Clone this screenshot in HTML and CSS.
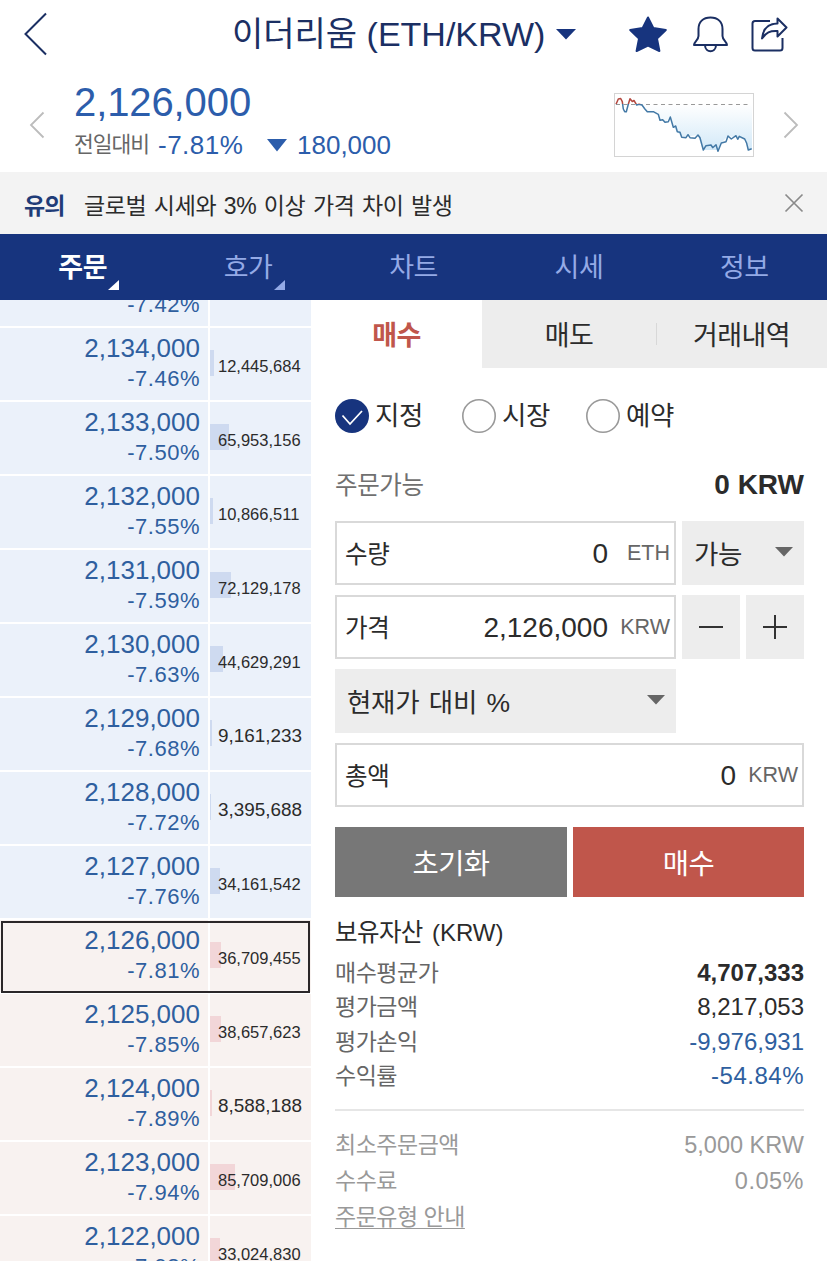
FILE: index.html
```html
<!DOCTYPE html>
<html lang="ko">
<head>
  <meta charset="UTF-8">
  <meta name="viewport" content="width=device-width, initial-scale=1.0">
  <title>이더리움 (ETH/KRW)</title>
  <link rel="stylesheet" href="styles.css">
</head>
<body>
  <header class="header">
    <svg class="back" width="24" height="44" viewBox="0 0 24 44"><path d="M22 1.500L1.500 22L22 42.500" fill="none" stroke="#1b2f63" stroke-width="2"/></svg>
    <h1 class="title">이더리움 (ETH/KRW)</h1>
    <svg class="title-arrow" width="20" height="11" viewBox="0 0 20 11"><path d="M0 0H20L10 10.500Z" fill="#17347e"/></svg>
    <div class="header-icons">
      <svg width="40" height="40" viewBox="0 0 40 40"><path d="M20 3.500L25.300 14L37.800 16L29 24.600L31.400 37L20 31.500L8.600 37L11 24.600L2.200 16L14.700 14Z" fill="#17347e" stroke="#17347e" stroke-width="2" stroke-linejoin="round"/></svg>
      <svg width="40" height="40" viewBox="0 0 40 40" fill="none" stroke="#1b2f63" stroke-width="2" stroke-linejoin="round"><path d="M21.500 3.500C14 3.500 9.500 8 9.500 15V22C9.500 26 5 28 5 31H38C38 28 33.500 26 33.500 22V15C33.500 8 29 3.500 21.500 3.500Z"/><path d="M16 31.500C16.500 39 26.500 39 27 31.500"/></svg>
      <svg width="40" height="40" viewBox="0 0 40 40" fill="none" stroke="#1b2f63" stroke-width="2" stroke-linejoin="round"><path d="M20 7H5Q2.500 7 2.500 9.500V34Q2.500 36.500 5 36.500H30Q32.500 36.500 32.500 34V24"/><path d="M12 24.500C13 15 18 9.500 27.500 9.500V4.500L36.500 13.500L27.500 22.500V17C20 16.500 16 18.500 12 24.500Z"/></svg>
    </div>
  </header>

  <section class="summary">
    <svg class="prev" width="16" height="28" viewBox="0 0 16 28"><path d="M14.500 1.500L2 14L14.500 26.500" fill="none" stroke="#bcbcbc" stroke-width="1.800"/></svg>
    <div class="summary-text">
      <div class="price">2,126,000</div>
      <div class="change">
        <span class="change-label">전일대비</span>
        <span class="change-rate">-7.81%</span>
        <svg width="20" height="13" viewBox="0 0 20 13"><path d="M0 0H20L10 12.500Z" fill="#2c5dab"/></svg>
        <span class="change-diff">180,000</span>
      </div>
    </div>
    <svg class="chart" width="140" height="64" viewBox="0 0 140 64">
      <defs>
        <linearGradient id="fall" x1="0" y1="0" x2="0" y2="1"><stop offset="0" stop-color="#fff"/><stop offset="1" stop-color="#d3e9f8"/></linearGradient>
        <clipPath id="above"><rect width="140" height="11"/></clipPath>
        <clipPath id="below"><rect y="11" width="140" height="53"/></clipPath>
      </defs>
      <rect x=".5" y=".5" width="139" height="63" fill="#fff" stroke="#d4d4d4"/>
      <path d="M28 12L33 18.700L44 21.300L46 27.300L51 29.300L56 24L59 34L63 38.700L68 44.300L84 42L89 57L104 57L107 50L114 43L130.700 46L134 57L138 56V11H28Z" fill="url(#fall)"/>
      <path d="M2 11.500H136" stroke="#999" stroke-dasharray="4 3.500"/>
      <g fill="none" stroke-width="1.500" stroke-linejoin="round">
        <polyline clip-path="url(#above)" stroke="#b4483f" points="2,11.300 4.300,6 6.700,5.500 8.300,8.700 9.300,16 10.700,18.700 12.300,18.700 14.300,11.300 16,5.700 18.300,8.500 20,7.500 22.700,12 25,11.300 28,12"/>
        <polyline clip-path="url(#below)" stroke="#4379a6" points="2,11.300 4.300,6 6.700,5.500 8.300,8.700 9.300,16 10.700,18.700 12.300,18.700 14.300,11.300 16,5.700 18.300,8.500 20,7.500 22.700,12 25,11.300 28,12 30.700,15.700 33.300,18.700 39.300,18.700 44.300,21.300 46,27.300 48.700,26.700 51,29.300 54.300,28.700 56.300,24 59.300,34.300 61.700,33 63.300,38.700 66,39.300 67.700,44.300 72,44.700 74,41.700 76,44.700 81,45.300 84,42 86,44.700 89.300,57 92,52.700 97,52 98.700,54.700 102,51.700 104,58.300 107.300,50 112,48.700 114,43 117.300,46 122,42.700 123.700,46.300 125.300,43.300 130.700,46 132.700,50.300 134.300,57 137.700,55.700"/>
      </g>
    </svg>
    <svg class="next" width="16" height="28" viewBox="0 0 16 28"><path d="M1.500 1.500L14 14L1.500 26.500" fill="none" stroke="#bcbcbc" stroke-width="1.800"/></svg>
  </section>

  <div class="notice">
    <strong>유의</strong>
    <span>글로벌 시세와 3% 이상 가격 차이 발생</span>
    <svg class="close" width="20" height="20" viewBox="0 0 20 20"><path d="M1.500 1.500L18.500 18.500M18.500 1.500L1.500 18.500" stroke="#8a8a8a" stroke-width="1.700"/></svg>
  </div>

  <nav class="tabs">
    <a class="tab tab-on tab-more">주문</a>
    <a class="tab tab-more">호가</a>
    <a class="tab">차트</a>
    <a class="tab">시세</a>
    <a class="tab">정보</a>
  </nav>

  <main class="main">
    <div class="book">
      <div class="row row-cut"><div class="cell"><p class="r">-7.42%</p></div><div class="qty"></div></div>
      <div class="row"><div class="cell"><p class="p">2,134,000</p><p class="r">-7.46%</p></div><div class="qty"><i style="width: 4px"></i><span>12,445,684</span></div></div>
      <div class="row"><div class="cell"><p class="p">2,133,000</p><p class="r">-7.50%</p></div><div class="qty"><i style="width: 19px"></i><span>65,953,156</span></div></div>
      <div class="row"><div class="cell"><p class="p">2,132,000</p><p class="r">-7.55%</p></div><div class="qty"><i style="width: 3px"></i><span>10,866,511</span></div></div>
      <div class="row"><div class="cell"><p class="p">2,131,000</p><p class="r">-7.59%</p></div><div class="qty"><i style="width: 21px"></i><span>72,129,178</span></div></div>
      <div class="row"><div class="cell"><p class="p">2,130,000</p><p class="r">-7.63%</p></div><div class="qty"><i style="width: 13px"></i><span>44,629,291</span></div></div>
      <div class="row"><div class="cell"><p class="p">2,129,000</p><p class="r">-7.68%</p></div><div class="qty"><i style="width: 2px"></i><span class="big">9,161,233</span></div></div>
      <div class="row"><div class="cell"><p class="p">2,128,000</p><p class="r">-7.72%</p></div><div class="qty"><i style="width: 1px"></i><span class="big">3,395,688</span></div></div>
      <div class="row"><div class="cell"><p class="p">2,127,000</p><p class="r">-7.76%</p></div><div class="qty"><i style="width: 10px"></i><span>34,161,542</span></div></div>
      <div class="row buy now"><div class="cell"><p class="p">2,126,000</p><p class="r">-7.81%</p></div><div class="qty"><i style="width: 11px"></i><span>36,709,455</span></div></div>
      <div class="row buy"><div class="cell"><p class="p">2,125,000</p><p class="r">-7.85%</p></div><div class="qty"><i style="width: 11px"></i><span>38,657,623</span></div></div>
      <div class="row buy"><div class="cell"><p class="p">2,124,000</p><p class="r">-7.89%</p></div><div class="qty"><i style="width: 2px"></i><span class="big">8,588,188</span></div></div>
      <div class="row buy"><div class="cell"><p class="p">2,123,000</p><p class="r">-7.94%</p></div><div class="qty"><i style="width: 25px"></i><span>85,709,006</span></div></div>
      <div class="row buy"><div class="cell"><p class="p">2,122,000</p><p class="r">-7.98%</p></div><div class="qty"><i style="width: 10px"></i><span>33,024,830</span></div></div>
    </div>

    <div class="order">
      <div class="order-tabs">
        <a class="order-tab order-tab-on">매수</a>
        <a class="order-tab">매도</a>
        <a class="order-tab order-tab-line">거래내역</a>
      </div>

      <div class="form">
        <div class="types">
          <label class="type"><svg width="34" height="34" viewBox="0 0 34 34"><circle cx="17" cy="17" r="17" fill="#17347e"/><path d="M7.500 16.500L15 25L27 12" fill="none" stroke="#fff" stroke-width="1.800"/></svg>지정</label>
          <label class="type"><svg width="34" height="34" viewBox="0 0 34 34"><circle cx="17" cy="17" r="16.200" fill="#fff" stroke="#999" stroke-width="1.600"/></svg>시장</label>
          <label class="type"><svg width="34" height="34" viewBox="0 0 34 34"><circle cx="17" cy="17" r="16.200" fill="#fff" stroke="#999" stroke-width="1.600"/></svg>예약</label>
        </div>
        <div class="avail"><span>주문가능</span><b>0 KRW</b></div>

        <div class="line">
          <div class="field"><span>수량</span><em>0</em><small>ETH</small></div>
          <div class="select select-amount">가능<svg width="18" height="10" viewBox="0 0 18 10"><path d="M0 0H18L9 9.500Z" fill="#666"/></svg></div>
        </div>
        <div class="line">
          <div class="field"><span>가격</span><em>2,126,000</em><small>KRW</small></div>
          <div class="step"><svg width="24" height="24" viewBox="0 0 24 24"><path d="M0 12H24" stroke="#333" stroke-width="2"/></svg></div>
          <div class="step"><svg width="24" height="24" viewBox="0 0 24 24"><path d="M0 12H24M12 0V24" stroke="#333" stroke-width="2"/></svg></div>
        </div>
        <div class="line">
          <div class="select select-ratio">현재가 대비 %<svg width="18" height="10" viewBox="0 0 18 10"><path d="M0 0H18L9 9.500Z" fill="#666"/></svg></div>
        </div>
        <div class="line">
          <div class="field field-total"><span>총액</span><em>0</em><small>KRW</small></div>
        </div>

        <div class="buttons">
          <a class="btn btn-reset">초기화</a>
          <a class="btn btn-buy">매수</a>
        </div>

        <h2 class="asset-title">보유자산 <span>(KRW)</span></h2>
        <dl class="assets">
          <div><dt>매수평균가</dt><dd class="bold">4,707,333</dd></div>
          <div><dt>평가금액</dt><dd>8,217,053</dd></div>
          <div><dt>평가손익</dt><dd class="blue">-9,976,931</dd></div>
          <div><dt>수익률</dt><dd class="blue wide">-54.84%</dd></div>
        </dl>
        <dl class="info">
          <div><dt>최소주문금액</dt><dd>5,000 KRW</dd></div>
          <div><dt>수수료</dt><dd class="wide">0.05%</dd></div>
          <div><dt><a class="guide">주문유형 안내</a></dt></div>
        </dl>
      </div>
    </div>
  </main>
</body>
</html>
```
FILE: styles.css
```css
* { box-sizing: border-box; margin: 0; padding: 0; }
body {
  width: 827px;
  height: 1261px;
  overflow: hidden;
  background: #fff;
  color: #2b2b2b;
  font-family: "Liberation Sans", "Noto Sans CJK KR", sans-serif;
  white-space: nowrap;
}
svg { display: block; flex: none; }

/* header */
.header { display: flex; align-items: center; height: 68px; padding: 0 19px 0 24px; color: #1b2f63; }
.title { width: 316px; margin-left: 184px; font-size: 34px; font-weight: 400; line-height: 68px; }
.title-arrow { margin-left: 8px; }
.header-icons { display: flex; gap: 21px; margin-left: auto; margin-right: 18px; }

.summary { display: flex; align-items: center; height: 104px; padding: 9px 28px 0 29px; color: #2c5dab; }
.summary-text { margin-left: 29px; height: 95px; }
.price { font-size: 40px; line-height: 50px; letter-spacing: -0.1px; }
.change { display: flex; align-items: center; font-size: 26px; line-height: 36px; }
.change-label { width: 84px; font-size: 21.5px; letter-spacing: -1px; color: #666; }
.change-rate { width: 109px; letter-spacing: 0.5px; }
.change-diff { margin-left: 10px; }
.chart { margin-left: auto; }
.next { margin-left: 29px; }

.notice { display: flex; align-items: center; height: 62px; padding: 2px 23px 0 24px; background: #f3f3f3; font-size: 23px; letter-spacing: -0.4px; word-spacing: 1.6px; }
.notice strong { width: 60px; color: #1f3c78; letter-spacing: -1px; }
.close { margin-top: -2px; margin-left: auto; }

.tabs { display: flex; height: 66px; background: #17347e; }
.tab { position: relative; flex: 1; padding-top: 2px; text-align: center; font-size: 27px; letter-spacing: -0.5px; line-height: 64px; color: #94aae6; }
.tab-on { font-weight: bold; color: #fff; }
.tab-more::after {
  content: "";
  position: absolute;
  right: 46px;
  bottom: 10px;
  border-left: 11px solid transparent;
  border-bottom: 10px solid currentColor;
}

.main { display: flex; height: 961px; }

/* order book */
.book { flex: none; width: 311px; height: 961px; overflow: hidden; }
.row { display: flex; gap: 2px; height: 72px; margin-bottom: 2px; }
.row-cut { height: 26px; }
.row-cut .cell, .row-cut .qty { height: 26px; padding-top: 0; }
.row-cut .r { margin-top: -10px; }
.cell { width: 208px; height: 72px; padding: 4px 8px 0 0; background: #ebf1fa; text-align: right; color: #2f5f9f; }
.p { font-size: 26px; line-height: 32px; }
.r { font-size: 22px; line-height: 29px; letter-spacing: 0.5px; }
.qty { display: flex; align-items: center; position: relative; width: 101px; height: 72px; padding: 5px 0 0 8px; background: #ebf1fa; font-size: 16.5px; }
.qty i { position: absolute; left: 0; top: 22px; height: 26px; background: #cedaf0; }
.qty span { position: relative; }
.qty .big { margin-top: -2px; font-size: 18.9px; }
.buy .cell, .buy .qty { background: #f8f2f0; }
.buy .qty i { background: #f2d6d8; }
.now { position: relative; }
.now::after { content: ""; position: absolute; left: 1px; right: 1px; top: 1px; bottom: -1px; border: 2px solid #2b2729; }

/* order form */
.order { flex: 1; }
.order-tabs { display: flex; height: 68px; background: #ededed; font-size: 27px; letter-spacing: -0.6px; line-height: 66px; text-align: center; }
.order-tab { width: 174px; height: 68px; padding-top: 3px; }
.order-tab-on { width: 171px; background: #fff; color: #c0564b; font-weight: bold; }
.order-tab-line { width: 171px; background: linear-gradient(#d8d8d8, #d8d8d8) 0 23px / 1px 22px no-repeat; }

.form { padding: 31px 23px 0 24px; }
.types { display: flex; height: 34px; }
.type { display: flex; align-items: center; gap: 6px; width: 127px; font-size: 26.5px; letter-spacing: -0.5px; line-height: 36px; }
.type + .type { width: 124px; }
.avail { display: flex; justify-content: space-between; margin-top: 35px; margin-bottom: 19px; line-height: 34px; }
.avail span { padding-top: 1px; font-size: 24.5px; letter-spacing: -0.4px; color: #707070; line-height: 33px; }
.avail b { font-size: 28px; line-height: 33px; }

.line { display: flex; gap: 6px; height: 64px; margin-bottom: 10px; }
.field { display: flex; align-items: center; width: 341px; padding: 0 4px 0 8px; border: 2px solid #d9d9d9; }
.field span { margin-top: -2px; font-size: 24.5px; letter-spacing: -0.4px; }
.field em { margin-top: 2px; margin-left: auto; font-size: 28px; font-style: normal; }
.field small { width: 50px; margin-left: 12px; font-size: 21.5px; text-align: right; color: #666; }
.field-total { width: 469px; }
.select { display: flex; align-items: center; justify-content: space-between; padding: 0 11px 2px 12px; background: #ededed; font-size: 26.5px; letter-spacing: -0.3px; word-spacing: 2.5px; }
.select-amount { width: 122px; }
.select-ratio { width: 341px; }
.step { display: flex; align-items: center; justify-content: center; width: 58px; background: #ededed; }

.buttons { display: flex; gap: 6px; margin-top: 20px; }
.btn { width: 232px; height: 70px; color: #fff; font-size: 28.5px; letter-spacing: -0.5px; line-height: 74px; text-align: center; }
.btn-reset { background: #777; }
.btn-buy { width: 231px; background: #c0564b; }

.asset-title { margin-top: 18px; font-size: 24.5px; font-weight: 400; letter-spacing: -0.6px; line-height: 36px; }
.asset-title span { margin-left: 3px; font-size: 24px; letter-spacing: 0; }
dl div { display: flex; justify-content: space-between; }
dt { font-size: 23px; letter-spacing: -0.5px; color: #666; }
dd { font-size: 24px; }
.bold { font-weight: bold; }
.blue { color: #2f5f9f; }
.wide { letter-spacing: 0.5px; }
.assets { margin-top: 5px; padding-bottom: 15px; border-bottom: 2px solid #e6e6e6; line-height: 34.4px; }
.info { margin-top: 16px; line-height: 36.3px; }
.info dt, .info dd { color: #999; }
.info dd { font-size: 23.5px; }
.guide { text-decoration: underline; text-underline-offset: 3px; text-decoration-thickness: 1px; }
```
